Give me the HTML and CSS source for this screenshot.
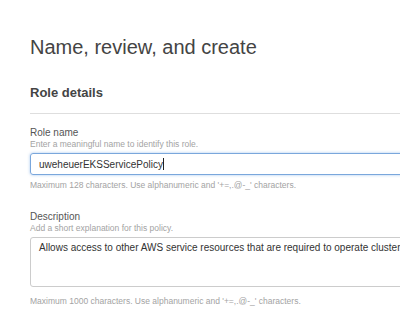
FILE: index.html
```html
<!DOCTYPE html>
<html>
<head>
<meta charset="utf-8">
<link rel="stylesheet" href="styles.css">
</head>
<body>
<div class="page">
  <h1 class="title">Name, review, and create</h1>
  <div class="section-head">
    <h2 class="section-title">Role details</h2>
  </div>
  <div class="field">
    <div class="label">Role name</div>
    <div class="hint">Enter a meaningful name to identify this role.</div>
    <div class="input focused"><span class="value">uweheuerEKSServicePolicy</span><span class="caret"></span></div>
    <div class="constraint">Maximum 128 characters. Use alphanumeric and '+=,.@-_' characters.</div>
  </div>
  <div class="field desc">
    <div class="label">Description</div>
    <div class="hint">Add a short explanation for this policy.</div>
    <div class="textarea"><span class="textarea-text">Allows access to other AWS service resources that are required to operate clusters managed by EKS on your behalf.</span></div>
    <div class="constraint">Maximum 1000 characters. Use alphanumeric and '+=,.@-_' characters.</div>
  </div>
</div>
</body>
</html>
```
FILE: styles.css
```css
html, body {
  margin: 0;
  padding: 0;
  background: #ffffff;
  overflow: hidden;
}
body {
  font-family: "Liberation Sans", Arial, sans-serif;
  color: #444444;
  width: 400px;
  height: 318px;
}
.page {
  padding: 35px 0 0 30px;
  width: 420px;
}
.title {
  margin: 0;
  font-size: 20px;
  line-height: 24px;
  font-weight: normal;
  color: #444444;
}
.section-head {
  margin-top: 26px;
  padding-bottom: 12px;
  border-bottom: 1px solid #dedede;
}
.section-title {
  margin: 0;
  font-size: 13px;
  line-height: 16px;
  font-weight: bold;
  color: #444444;
}
.field {
  margin-top: 13px;
  display: flex;
  flex-direction: column;
}
.label {
  font-size: 10px;
  line-height: 12px;
  color: #555555;
}
.hint {
  font-size: 8.5px;
  line-height: 10px;
  color: #a3a3a3;
}
.input {
  margin-top: 4px;
  height: 20px;
  border: 1px solid #7aa7dc;
  border-radius: 3px;
  box-shadow: 0 0 3px rgba(90, 150, 220, 0.55);
  display: flex;
  align-items: center;
  padding-left: 8px;
  font-size: 10px;
  color: #333333;
  white-space: nowrap;
}
.caret {
  display: inline-block;
  width: 1px;
  height: 12px;
  background: #222222;
}
.constraint {
  margin-top: 5px;
  font-size: 8.5px;
  line-height: 10px;
  color: #a3a3a3;
}
.desc {
  margin-top: 21px;
}
.textarea {
  margin-top: 4px;
  height: 40px;
  border: 1px solid #cccccc;
  border-radius: 3px;
  padding: 4px 8px;
  font-size: 10px;
  line-height: 12px;
  color: #333333;
  white-space: nowrap;
  overflow: hidden;
}
.desc .constraint {
  margin-top: 9px;
}
```
